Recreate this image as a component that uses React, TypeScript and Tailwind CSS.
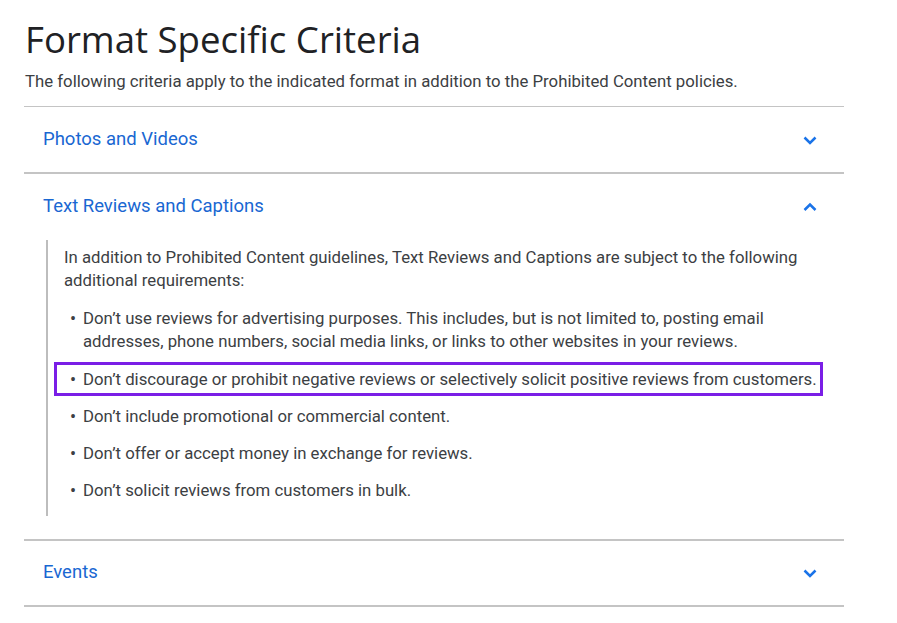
import React from "react";

function Chevron({ up }: { up?: boolean }) {
  return (
    <svg width="24" height="24" viewBox="0 0 24 24" className="text-[#1a73e8]">
      <path
        d={up ? "M6.5 15 L12 9.5 L17.5 15" : "M6.5 9.5 L12 15 L17.5 9.5"}
        fill="none"
        stroke="currentColor"
        strokeWidth="2.5"
      />
    </svg>
  );
}

const items = [
  "Don’t use reviews for advertising purposes. This includes, but is not limited to, posting email addresses, phone numbers, social media links, or links to other websites in your reviews.",
  "Don’t discourage or prohibit negative reviews or selectively solicit positive reviews from customers.",
  "Don’t include promotional or commercial content.",
  "Don’t offer or accept money in exchange for reviews.",
  "Don’t solicit reviews from customers in bulk.",
];

export default function App() {
  return (
    <div className="bg-white w-[897px] h-[623px] overflow-hidden pl-[24px] pt-[15px]" style={{ fontFamily: "Roboto, 'Liberation Sans', sans-serif" }}>
      <h1 className="text-[36.6px] leading-[48px] text-[#202124] ml-[1px]" style={{ fontFamily: "'Open Sans', Roboto, sans-serif" }}>
        Format Specific Criteria
      </h1>
      <p className="text-[16.75px] leading-[24px] text-[#3c4043] mt-[6px] ml-[1px]">
        The following criteria apply to the indicated format in addition to the Prohibited Content policies.
      </p>
      <div className="w-[820px] mt-[13px]">
        <div className="border-t border-[#c4c4c4] h-[66px] flex items-center justify-between pl-[19px] pr-[22px]">
          <span className="text-[18.5px] text-[#1967d2]">Photos and Videos</span>
          <Chevron />
        </div>
        <div className="border-t-2 border-[#c4c4c4]">
          <div className="h-[66px] flex items-center justify-between pl-[19px] pr-[22px]">
            <span className="text-[18.5px] text-[#1967d2]">Text Reviews and Captions</span>
            <Chevron up />
          </div>
          <div className="ml-[22px] border-l-2 border-[#bdbdbd] pl-[16px] pb-[14px] text-[16.75px] leading-[23px] text-[#3c4043] mb-[23px]">
            <p className="pt-[6px] w-[745px]">
              In addition to Prohibited Content guidelines, Text Reviews and Captions are subject to the following additional requirements:
            </p>
            <ul className="mt-[15px] flex flex-col">
              {items.map((t, i) => (
                <li
                  key={i}
                  className={
                    i === 1
                      ? "flex mt-[9px] ml-[-10px] w-[769px] border-[3px] border-[#7a1ee6] pl-[13px] py-[2.5px]"
                      : i === 2
                      ? "flex mt-[8.5px] pl-[6px]"
                      : i === 0
                      ? "flex pl-[6px]"
                      : "flex mt-[14px] pl-[6px]"
                  }
                >
                  <span className="w-[13px] shrink-0 text-[18px]">•</span>
                  <span className="w-[740px]">{t}</span>
                </li>
              ))}
            </ul>
          </div>
        </div>
        <div className="border-t-2 border-[#c4c4c4] h-[66px] flex items-center justify-between pl-[19px] pr-[22px]">
          <span className="text-[18.5px] text-[#1967d2]">Events</span>
          <Chevron />
        </div>
        <div className="border-t-2 border-[#c4c4c4]" />
      </div>
    </div>
  );
}
